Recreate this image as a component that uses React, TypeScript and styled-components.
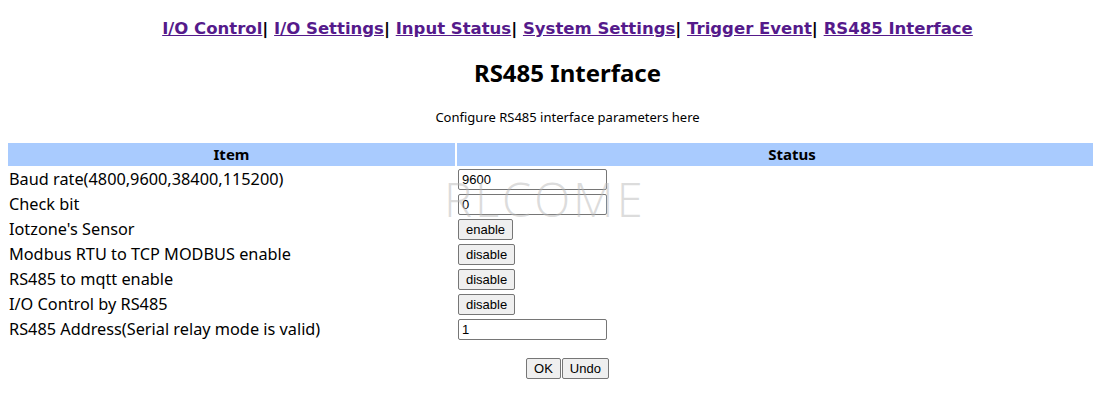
import React from 'react';
import styled, { createGlobalStyle } from 'styled-components';

const GlobalStyle = createGlobalStyle`
  html, body {
    background: #ffffff;
  }
  body {
    margin: 0 0 0 8px;
    overflow: hidden;
    font-family: 'Noto Sans', 'Open Sans', sans-serif;
    color: #000000;
  }
`;

const links = [
  'I/O Control',
  'I/O Settings',
  'Input Status',
  'System Settings',
  'Trigger Event',
  'RS485 Interface',
];

type Row = {
  label: string;
  kind: 'input' | 'button';
  value: string;
};

const rows: Row[] = [
  { label: 'Baud rate(4800,9600,38400,115200)', kind: 'input', value: '9600' },
  { label: 'Check bit', kind: 'input', value: '0' },
  { label: "Iotzone's Sensor", kind: 'button', value: 'enable' },
  { label: 'Modbus RTU to TCP MODBUS enable', kind: 'button', value: 'disable' },
  { label: 'RS485 to mqtt enable', kind: 'button', value: 'disable' },
  { label: 'I/O Control by RS485', kind: 'button', value: 'disable' },
  { label: 'RS485 Address(Serial relay mode is valid)', kind: 'input', value: '1' },
];

const App = () => {
  return (
    <Page>
      <GlobalStyle />
      <Nav>
        {links.map((name, i) => (
          <React.Fragment key={name}>
            <NavLink href="#">{name}</NavLink>
            {i < links.length - 1 && <Sep>| </Sep>}
          </React.Fragment>
        ))}
      </Nav>
      <Title>RS485 Interface</Title>
      <Subtitle>Configure RS485 interface parameters here</Subtitle>

      <Table>
        <HeadCell>Item</HeadCell>
        <HeadCell>Status</HeadCell>
        {rows.map((row) => (
          <React.Fragment key={row.label}>
            <LabelCell>{row.label}</LabelCell>
            <ValueCell>
              {row.kind === 'input' ? (
                <TextBox type="text" defaultValue={row.value} />
              ) : (
                <Button type="button">{row.value}</Button>
              )}
            </ValueCell>
          </React.Fragment>
        ))}
      </Table>

      <Actions>
        <Button type="button">OK</Button>
        <Button type="button">Undo</Button>
      </Actions>

      <Watermark>RLCOME</Watermark>
    </Page>
  );
};

export default App;

// the original page is wider than the window, so the centre sits at 567px
const Page = styled.div`
  position: relative;
  width: 1119px;
  display: flex;
  flex-direction: column;
`;

const Nav = styled.nav`
  height: 40px;
  margin-top: 8px;
  line-height: 41px;
  text-align: center;
  font-family: 'DejaVu Sans', Verdana, sans-serif;
  font-weight: bold;
  font-size: 16.5px;
  white-space: nowrap;
`;

const NavLink = styled.a`
  color: #551a8b;
  text-decoration: underline;
`;

const Sep = styled.span`
  color: #000000;
  white-space: pre;
`;

const Title = styled.h1`
  margin: 10px 0 0;
  height: 30px;
  line-height: 30px;
  text-align: center;
  font-size: 24px;
  font-weight: bold;
`;

const Subtitle = styled.p`
  margin: 20px 0 0;
  height: 18px;
  line-height: 19px;
  text-align: center;
  font-size: 13px;
`;

const Table = styled.div`
  margin-top: 17px;
  display: grid;
  grid-template-columns: 447px 1fr;
  column-gap: 2px;
  grid-auto-rows: 25px;
  grid-template-rows: 23px;
  font-size: 16.3px;
`;

const HeadCell = styled.div`
  background: #a9cbfe;
  text-align: center;
  font-weight: bold;
  line-height: 23px;
  font-size: 15px;
`;

const LabelCell = styled.div`
  display: flex;
  align-items: center;
  padding-left: 1px;
  padding-top: 1px;
  white-space: nowrap;
`;

const ValueCell = styled.div`
  display: flex;
  align-items: center;
  padding-left: 1px;
  padding-top: 1px;
`;

const TextBox = styled.input`
  box-sizing: border-box;
  width: 149px;
  height: 21px;
  margin: 0;
  padding: 1px 3px;
  border: 1px solid #767676;
  border-radius: 2px;
  font-family: 'Liberation Sans', Arial, sans-serif;
  font-size: 13px;
  color: #000000;
  background: #ffffff;
`;

const Button = styled.button`
  box-sizing: border-box;
  height: 21px;
  margin: 0;
  padding: 0 7px;
  border: 1px solid #767676;
  border-radius: 2px;
  background: #efefef;
  font-family: 'Liberation Sans', Arial, sans-serif;
  font-size: 13px;
  color: #000000;
`;

const Actions = styled.div`
  margin-top: 17px;
  display: flex;
  justify-content: center;
  gap: 1px;
`;

const Watermark = styled.div`
  position: absolute;
  left: 436px;
  top: 168px;
  font-family: 'Open Sans', 'Liberation Sans', sans-serif;
  font-weight: 300;
  font-size: 47px;
  line-height: 62px;
  letter-spacing: 3px;
  color: rgba(185, 185, 185, 0.5);
  pointer-events: none;
`;
